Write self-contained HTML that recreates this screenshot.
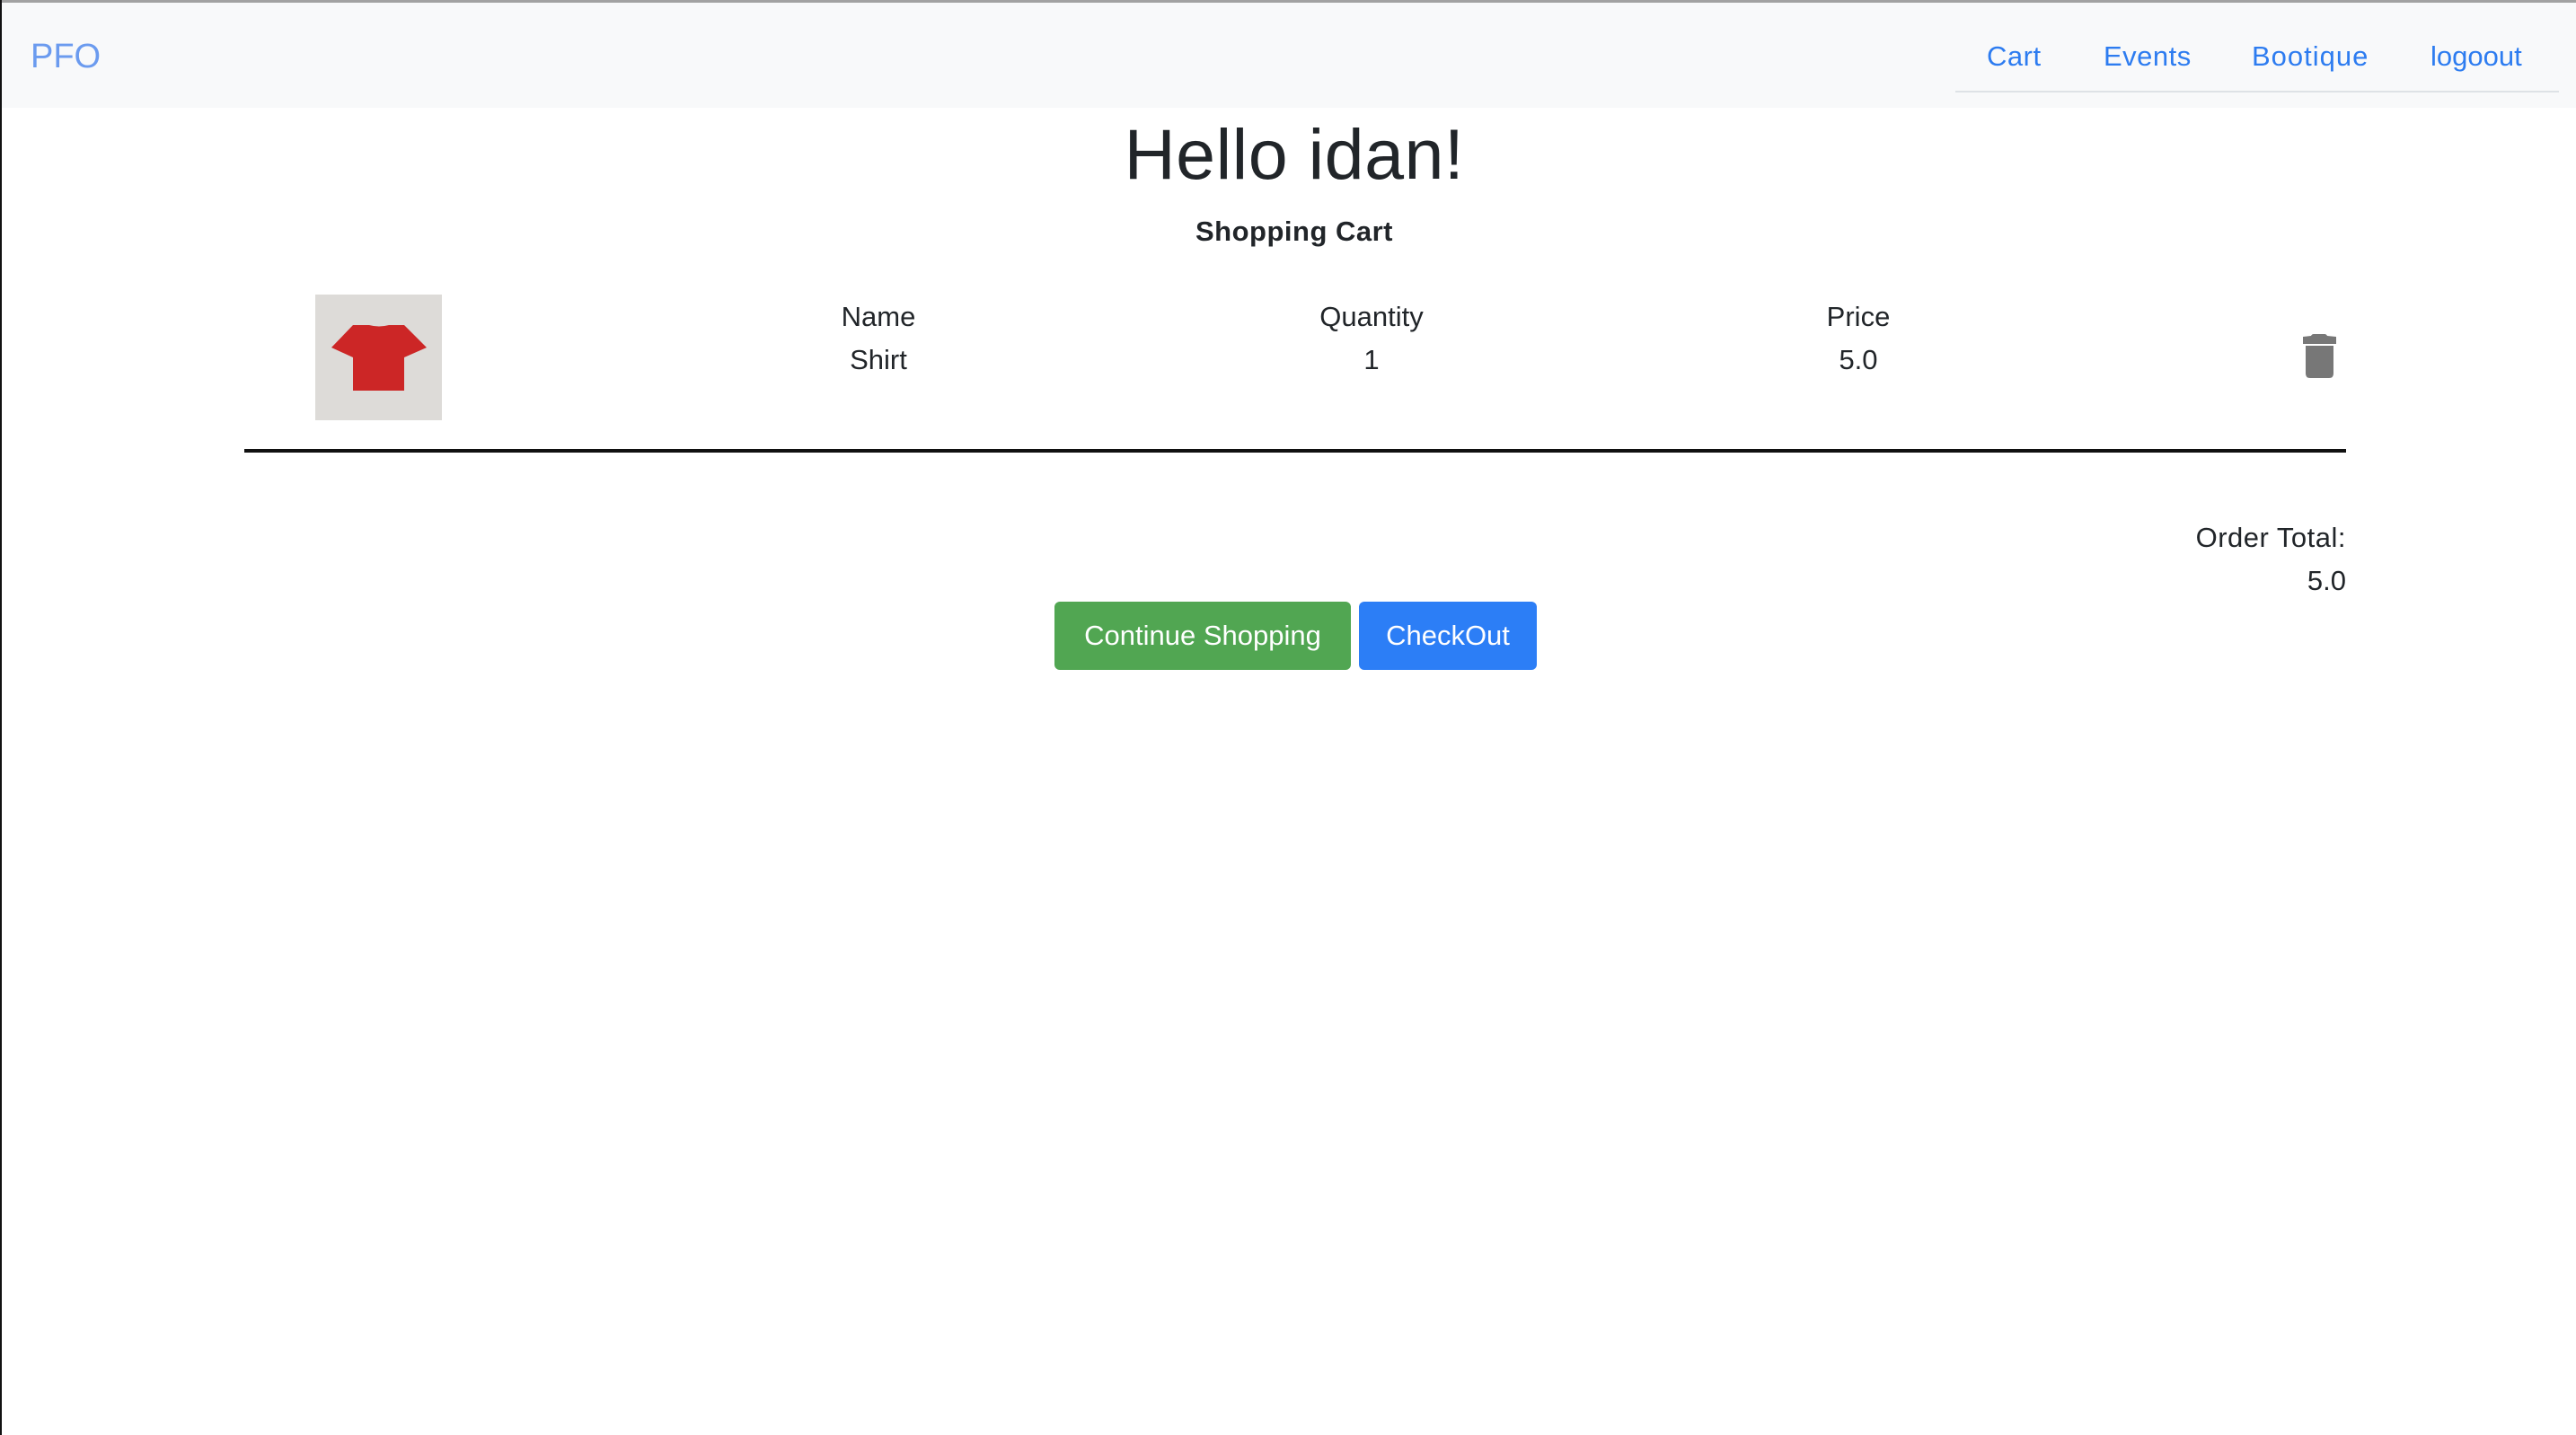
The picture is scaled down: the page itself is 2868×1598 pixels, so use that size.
<!DOCTYPE html>
<html><head><meta charset="utf-8"><style>
*{margin:0;padding:0;box-sizing:border-box}
html,body{width:2868px;height:1598px;overflow:hidden;background:#fff;font-family:"Liberation Sans",Arial,sans-serif;color:#212529}
.a{position:absolute;white-space:nowrap;line-height:1}
#top{position:absolute;left:0;top:0;width:2868px;height:3px;background:#a2a2a2}
#left{position:absolute;left:0;top:0;width:2px;height:1598px;background:#111}
#nav{position:absolute;left:2px;top:3px;width:2866px;height:117px;background:#f8f9fa}
.nl{color:#2d7cf0;font-size:31px;top:47px}
.c{transform:translateX(-50%);font-size:31px}
</style></head><body>
<div id="nav"></div>
<div id="top"></div>
<div id="left"></div>
<div class="a" style="left:34px;top:44px;font-size:38px;color:#6b9bef">PFO</div>
<div class="a nl" style="left:2212px;letter-spacing:0.5px">Cart</div>
<div class="a nl" style="left:2342px;letter-spacing:0.5px">Events</div>
<div class="a nl" style="left:2507px;letter-spacing:1px">Bootique</div>
<div class="a nl" style="left:2706px">logoout</div>
<div style="position:absolute;left:2177px;top:101px;width:672px;height:2px;background:#dee2e6"></div>
<div class="a" style="left:1441px;top:132px;transform:translateX(-50%);font-size:79px;font-weight:500;letter-spacing:0.5px">Hello idan!</div>
<div class="a" style="left:1441px;top:242px;transform:translateX(-50%);font-size:31px;font-weight:bold;letter-spacing:0.5px">Shopping Cart</div>
<svg style="position:absolute;left:351px;top:328px" width="141" height="140" viewBox="0 0 141 140">
<rect width="141" height="140" fill="#dddbd8"/>
<path d="M42 34 L60 34 Q71 37 82 34 L99 34 L124 59 L99 70 L99 107 L42 107 L42 70 L18 59 Z" fill="#cc2626"/>
</svg>
<div class="a c" style="left:978px;top:337px">Name</div>
<div class="a c" style="left:978px;top:385px">Shirt</div>
<div class="a c" style="left:1527px;top:337px">Quantity</div>
<div class="a c" style="left:1527px;top:385px">1</div>
<div class="a c" style="left:2069px;top:337px">Price</div>
<div class="a c" style="left:2069px;top:385px">5.0</div>
<svg style="position:absolute;left:2560px;top:370px" width="44" height="54" viewBox="0 0 44 54">
<path d="M13 4 Q14 2 16 2 L28 2 Q30 2 31 4 L41 5 L41 13 L4 13 L4 5 Z" fill="#777"/>
<path d="M7 15 L38 15 L38 46 Q38 51 33 51 L12 51 Q7 51 7 46 Z" fill="#777"/>
</svg>
<div style="position:absolute;left:272px;top:500px;width:2340px;height:4px;background:#111"></div>
<div class="a" style="right:256px;top:583px;font-size:31px;letter-spacing:0.5px">Order Total:</div>
<div class="a" style="right:256px;top:631px;font-size:31px">5.0</div>
<div class="a" style="left:1174px;top:670px;width:330px;height:76px;background:#51a652;border-radius:6px;color:#fff;font-size:31px;line-height:76px;text-align:center">Continue Shopping</div>
<div class="a" style="left:1513px;top:670px;width:198px;height:76px;background:#2c7ef6;border-radius:6px;color:#fff;font-size:31px;line-height:76px;text-align:center">CheckOut</div>
</body></html>
